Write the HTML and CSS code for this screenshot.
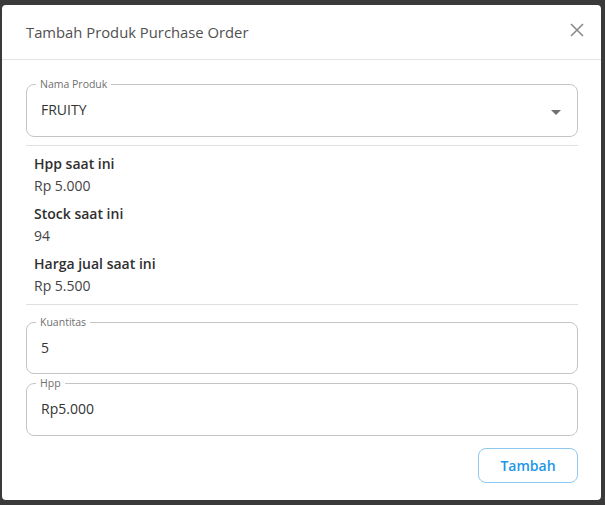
FILE: index.html
```html
<!DOCTYPE html>
<html lang="id">
<head>
<meta charset="utf-8">
<title>Tambah Produk Purchase Order</title>
<link rel="stylesheet" href="styles.css">
</head>
<body>
<div class="dialog">
  <div class="dialog-header">
    <h2 class="dialog-title">Tambah Produk Purchase Order</h2>
    <button class="close-btn" aria-label="Tutup">
      <svg width="14" height="14" viewBox="0 0 14 14"><path d="M1 1L13 13M13 1L1 13" stroke="#8a8a8a" stroke-width="1.6" fill="none"/></svg>
    </button>
  </div>
  <div class="dialog-body">
    <fieldset class="field field-select">
      <legend>Nama Produk</legend>
      <div class="field-value">FRUITY</div>
      <span class="select-arrow"></span>
    </fieldset>
    <hr class="divider">
    <div class="info">
      <div class="info-item">
        <div class="info-label">Hpp saat ini</div>
        <div class="info-value">Rp 5.000</div>
      </div>
      <div class="info-item">
        <div class="info-label">Stock saat ini</div>
        <div class="info-value">94</div>
      </div>
      <div class="info-item">
        <div class="info-label">Harga jual saat ini</div>
        <div class="info-value">Rp 5.500</div>
      </div>
    </div>
    <hr class="divider divider-bottom">
    <fieldset class="field field-qty">
      <legend>Kuantitas</legend>
      <div class="field-value">5</div>
    </fieldset>
    <fieldset class="field field-hpp">
      <legend>Hpp</legend>
      <div class="field-value">Rp5.000</div>
    </fieldset>
    <div class="actions">
      <button class="btn-primary">Tambah</button>
    </div>
  </div>
</div>
</body>
</html>
```
FILE: styles.css
```css
* { box-sizing: border-box; }
html, body { margin: 0; padding: 0; }
body {
  background: #3a3a3a;
  padding: 5px 4px 5px 2px;
  font-family: "Open Sans", "Noto Sans", sans-serif;
  color: #333;
}
.dialog {
  width: 599px;
  height: 495px;
  background: #fff;
  border-radius: 4px;
  overflow: hidden;
}
.dialog-header {
  height: 55px;
  display: flex;
  align-items: center;
  justify-content: space-between;
  padding: 0 16px 0 24px;
  border-bottom: 1px solid #e3e3e3;
}
.dialog-title {
  margin: 0;
  font-size: 14.8px;
  font-weight: 400;
  color: #505050;
}
.close-btn {
  border: 0;
  background: none;
  padding: 0;
  width: 16px;
  height: 16px;
  display: flex;
  align-items: center;
  justify-content: center;
  margin-top: -4px;
}
.dialog-body {
  padding: 18px 23px 0 24px;
}
.field {
  margin: 0;
  border: 1px solid #c4c4c4;
  border-radius: 8px;
  padding: 0 14px;
  height: 58px;
  position: relative;
  display: flex;
  align-items: center;
}
.field-select { height: 59px; }
.field-hpp { height: 59px; }
.field legend {
  font-size: 10.5px;
  line-height: 12px;
  color: #6f6f6f;
  padding: 0 4px;
  margin-left: -5px;
}
.field-value {
  font-size: 14px;
  color: #333;
  margin-top: -7px;
}
.select-arrow {
  position: absolute;
  right: 16px;
  top: 20px;
  width: 0;
  height: 0;
  border-left: 5px solid transparent;
  border-right: 5px solid transparent;
  border-top: 5px solid #707070;
}
.divider {
  border: 0;
  border-top: 1px solid #e0e0e0;
  margin: 8px 0 0;
}
.divider-bottom { margin-top: 7px; }
.info {
  padding: 7px 8px 0;
  display: flex;
  flex-direction: column;
  gap: 6px;
}
.info-label {
  font-size: 14px;
  font-weight: 600;
  color: #2f2f2f;
  line-height: 22px;
}
.info-value {
  font-size: 14px;
  color: #444;
  line-height: 22px;
}
.field-qty { margin-top: 11px; }
.field-hpp { margin-top: 3px; }
.actions {
  display: flex;
  justify-content: flex-end;
  margin-top: 12px;
}
.btn-primary {
  width: 100px;
  height: 35px;
  border: 1px solid #8cc8f0;
  border-radius: 8px;
  background: #fff;
  color: #2196e8;
  font-family: inherit;
  font-size: 14px;
  font-weight: 600;
}
```
